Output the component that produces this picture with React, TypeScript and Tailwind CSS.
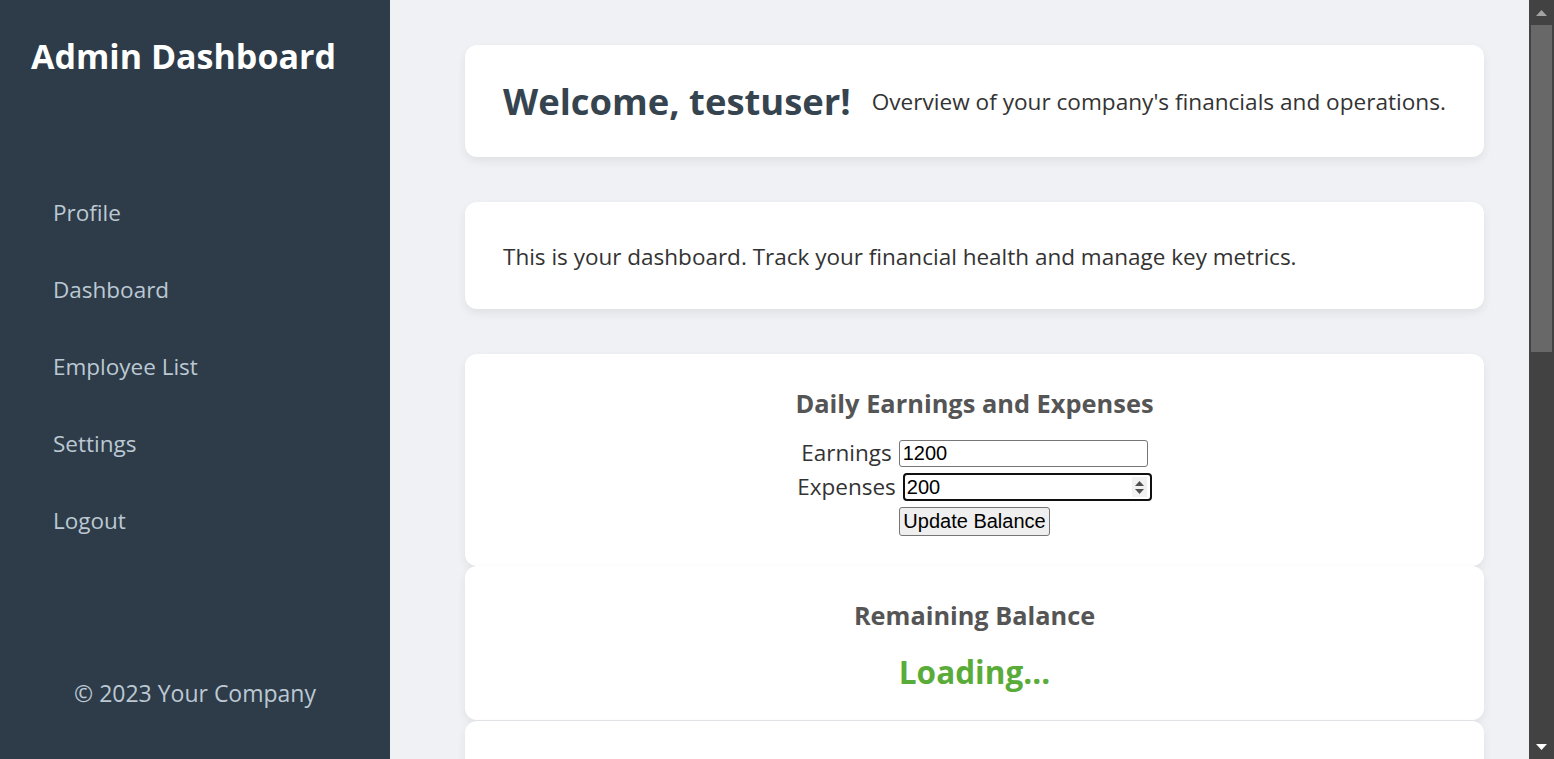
import { useState } from "react"

const navItems = ["Profile", "Dashboard", "Employee List", "Settings", "Logout"]

function Sidebar() {
  return (
    <aside className="flex h-full w-[390px] shrink-0 flex-col bg-[#2d3c48]">
      <h1 className="pl-[31px] pt-[36px] text-[34px] leading-[40px] font-bold text-white">Admin Dashboard</h1>
      <nav className="mt-[98px] flex flex-col">
        {navItems.map((item) => (
          <a
            key={item}
            href="#"
            className="flex h-[77px] items-center pl-[53px] text-[22.5px] text-[#bcc8d3] hover:text-white"
          >
            {item}
          </a>
        ))}
      </nav>
      <footer className="mt-auto pb-[51px] text-center text-[23px] leading-[30px] text-[#bcc8d3]">
        © 2023 Your Company
      </footer>
    </aside>
  )
}

function Scrollbar() {
  return (
    <div className="flex h-full w-[25px] shrink-0 flex-col bg-[#424242]">
      <div className="flex h-[25px] items-center justify-center">
        <svg width="11" height="6" viewBox="0 0 11 6">
          <path d="M5.5 0L11 6H0z" fill="#a3a3a3" />
        </svg>
      </div>
      <div className="mx-[2px] h-[327px] bg-[#686868]" />
      <div className="flex-1" />
      <div className="flex h-[25px] items-center justify-center">
        <svg width="11" height="6" viewBox="0 0 11 6">
          <path d="M0 0H11L5.5 6z" fill="#ffffff" />
        </svg>
      </div>
    </div>
  )
}

function BalanceForm() {
  const [earnings, setEarnings] = useState("1200")
  const [expenses, setExpenses] = useState("200")

  return (
    <div className="rounded-[12px] bg-white pt-[35px] pb-[28px] text-center shadow-[0_4px_10px_rgba(0,0,0,0.07)]">
      <h2 className="text-[25.4px] leading-[29px] font-bold text-[#555555]">Daily Earnings and Expenses</h2>
      <div className="mt-[18px] flex flex-col">
        <div className="flex h-[34px] items-center justify-center gap-[7px]">
          <label className="text-[22.5px] text-[#333333]">Earnings</label>
          <input
            type="number"
            value={earnings}
            onChange={(e) => setEarnings(e.target.value)}
            className="h-[27px] w-[249px] rounded-[3px] border border-[#767676] px-[3px] font-['Liberation_Sans',sans-serif] text-[20px] text-black [appearance:textfield] [&::-webkit-inner-spin-button]:appearance-none"
          />
        </div>
        <div className="flex h-[34px] items-center justify-center gap-[7px]">
          <label className="text-[22.5px] text-[#333333]">Expenses</label>
          <div className="flex h-[28px] w-[249px] items-center rounded-[4px] border-2 border-[#101010] bg-white pl-[2px] pr-[3px]">
            <input
              type="number"
              autoFocus
              value={expenses}
              onChange={(e) => setExpenses(e.target.value)}
              className="min-w-0 flex-1 font-['Liberation_Sans',sans-serif] text-[20px] leading-[22px] text-black outline-none [appearance:textfield] [&::-webkit-inner-spin-button]:appearance-none"
            />
            <div className="flex h-[20px] w-[15px] flex-col items-center justify-center gap-[3px] bg-[#f1f1f1]">
              <svg width="9" height="5" viewBox="0 0 9 5">
                <path d="M4.5 0L9 5H0z" fill="#505050" />
              </svg>
              <svg width="9" height="5" viewBox="0 0 9 5">
                <path d="M0 0H9L4.5 5z" fill="#505050" />
              </svg>
            </div>
          </div>
        </div>
        <div className="flex h-[34px] items-center justify-center">
          <button className="h-[29px] rounded-[3px] border border-[#767676] bg-[#efefef] px-[3px] font-['Liberation_Sans',sans-serif] text-[20px] leading-[22px] text-black">
            Update Balance
          </button>
        </div>
      </div>
    </div>
  )
}

export default function App() {
  return (
    <div className="flex h-screen w-full overflow-hidden font-['Open_Sans',sans-serif]">
      <Sidebar />
      <main className="flex-1 overflow-y-auto bg-[#f0f1f5] [scrollbar-width:none]">
        <div className="flex flex-col pt-[45px] pr-[45px] pb-[45px] pl-[75px]">
          <section className="mb-[45px] flex h-[112px] items-center gap-[21px] rounded-[12px] bg-white px-[38px] shadow-[0_4px_10px_rgba(0,0,0,0.07)]">
            <h2 className="text-[36.4px] leading-[46px] font-bold text-[#36444f]">Welcome, testuser!</h2>
            <p className="pt-[2px] text-[22.6px] text-[#333333]">Overview of your company's financials and operations.</p>
          </section>

          <section className="mb-[45px] flex h-[107px] items-center rounded-[12px] bg-white px-[38px] pt-[3px] shadow-[0_4px_10px_rgba(0,0,0,0.07)]">
            <p className="text-[22.5px] text-[#333333]">
              This is your dashboard. Track your financial health and manage key metrics.
            </p>
          </section>

          <BalanceForm />

          <section className="mb-px rounded-[12px] bg-white pt-[35px] pb-[31px] text-center shadow-[0_4px_10px_rgba(0,0,0,0.07)]">
            <h2 className="text-[25.3px] leading-[29px] font-bold text-[#555555]">Remaining Balance</h2>
            <p className="mt-[24px] text-[31.5px] leading-[35px] font-bold text-[#5aac3a]">Loading...</p>
          </section>

          {/* cards below the fold */}
          <section className="mb-[45px] h-[420px] rounded-[12px] bg-white shadow-[0_4px_10px_rgba(0,0,0,0.07)]" />
          <section className="h-[260px] rounded-[12px] bg-white shadow-[0_4px_10px_rgba(0,0,0,0.07)]" />
        </div>
      </main>
      <Scrollbar />
    </div>
  )
}
